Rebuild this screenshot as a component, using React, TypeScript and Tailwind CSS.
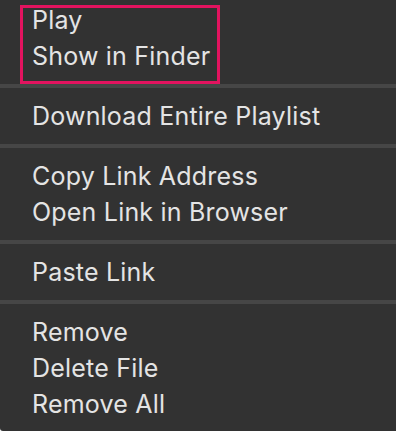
import React from "react";

const Item = ({ label }: { label: string }) => (
  <div className="h-[36px] flex items-center pl-[32px] text-[25px] text-[#e4e4e4] leading-none whitespace-nowrap tracking-[0.2px]">
    {label}
  </div>
);

const Sep = () => <div className="h-[4px] bg-[#464646]" />;

export default function App() {
  return (
    <div
      className="w-[396px] h-[431px] bg-[#323232] overflow-hidden rounded-bl-[3px]"
      style={{ fontFamily: "Inter, 'Noto Sans', sans-serif" }}
    >
      <div className="relative pt-[2px] pb-[10px]">
        <Item label="Play" />
        <Item label="Show in Finder" />
        <div className="absolute left-[20px] top-[5px] w-[200px] h-[79px] border-[3px] border-[#e3135f]" />
      </div>
      <Sep />
      <div className="py-[10px]">
        <Item label="Download Entire Playlist" />
      </div>
      <Sep />
      <div className="py-[10px]">
        <Item label="Copy Link Address" />
        <Item label="Open Link in Browser" />
      </div>
      <Sep />
      <div className="py-[10px]">
        <Item label="Paste Link" />
      </div>
      <Sep />
      <div className="py-[10px]">
        <Item label="Remove" />
        <Item label="Delete File" />
        <Item label="Remove All" />
      </div>
    </div>
  );
}
